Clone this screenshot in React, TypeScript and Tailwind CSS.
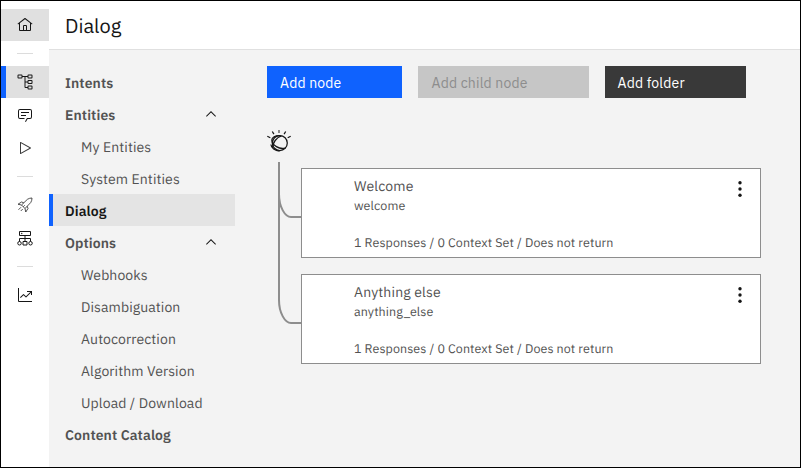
import React from "react";

type IconProps = { children: React.ReactNode };

function Icon({ children }: IconProps) {
  return (
    <svg viewBox="0 0 32 32" className="h-4 w-4" fill="#161616">
      {children}
    </svg>
  );
}

function RailItem({ children, className = "" }: { children: React.ReactNode; className?: string }) {
  return <a className={`flex w-12 shrink-0 items-center justify-center ${className}`}>{children}</a>;
}

function RailDivider() {
  return <div className="mx-auto h-px w-4 shrink-0 bg-[#dcdcdc]" />;
}

function Rail() {
  return (
    <nav className="flex w-12 shrink-0 flex-col bg-white pt-2">
      <RailItem className="mb-3 h-8 bg-[#e0e0e0]">
        <Icon>
          <path d="M16.6123,2.2138a1.01,1.01,0,0,0-1.2427,0L1,13.4194l1.2427,1.5717L4,13.6209V26a2.0041,2.0041,0,0,0,2,2H26a2.0037,2.0037,0,0,0,2-2V13.63L29.7573,15,31,13.4282ZM18,26H14V18h4Zm2,0V18a2.0023,2.0023,0,0,0-2-2H14a2.002,2.002,0,0,0-2,2v8H6V12.0615l10-7.79,10,7.8005V26Z" />
        </Icon>
      </RailItem>
      <RailDivider />
      <RailItem className="mt-3 h-8 border-l-[5px] border-[#0f62fe] bg-[#e0e0e0] pr-[5px]">
        <Icon>
          <path d="M23,9h6a2,2,0,0,0,2-2V3a2,2,0,0,0-2-2H23a2,2,0,0,0-2,2V4H11V3A2,2,0,0,0,9,1H3A2,2,0,0,0,1,3V7A2,2,0,0,0,3,9H9a2,2,0,0,0,2-2V6h4V26a2,2,0,0,0,2,2h4v1a2,2,0,0,0,2,2h6a2,2,0,0,0,2-2V25a2,2,0,0,0-2-2H23a2,2,0,0,0-2,2v1H17V17h4v1a2,2,0,0,0,2,2h6a2,2,0,0,0,2-2V14a2,2,0,0,0-2-2H23a2,2,0,0,0-2,2v1H17V6h4V7A2,2,0,0,0,23,9Zm0-6h6V7H23ZM9,7H3V3H9ZM23,25h6v4H23Zm0-11h6v4H23Z" />
        </Icon>
      </RailItem>
      <RailItem className="h-[33px]">
        <Icon>
          <path d="M17.74,30,16,29l4-7h6a2,2,0,0,0,2-2V8a2,2,0,0,0-2-2H6A2,2,0,0,0,4,8V20a2,2,0,0,0,2,2h9v2H6a4,4,0,0,1-4-4V8A4,4,0,0,1,6,4H26a4,4,0,0,1,4,4V20a4,4,0,0,1-4,4H21.16Z" />
          <path d="M8 10H24V12H8zM8 16H18V18H8z" />
        </Icon>
      </RailItem>
      <RailItem className="h-[33px]">
        <Icon>
          <path fill="#3d3d3d" d="M7,28a1,1,0,0,1-1-1V5a1,1,0,0,1,1.4819-.8763l20,11a1,1,0,0,1,0,1.7525l-20,11A1.0005,1.0005,0,0,1,7,28ZM8,6.6909V25.3088L24.9248,16Z" />
        </Icon>
      </RailItem>
      <div className="h-3" />
      <RailDivider />
      <div className="h-3" />
      <RailItem className="h-8">
        <Icon>
          <g fill="none" stroke="#333333" strokeWidth="1.7" strokeLinejoin="round">
            <path d="M9 16L21 4.500Q25 2 30 2Q30 7 27.500 11L16 23Z" />
            <path d="M13.500 11.500L9 10L2 14.500L9 16M20.500 18.500L22 23L17.500 30L16 23" />
            <path d="M8 20.500l-5 5M11.500 24l-4 4M12.500 19.500l3-3" />
          </g>
        </Icon>
      </RailItem>
      <RailItem className="h-[34px]">
        <Icon>
          <g fill="none" stroke="#161616" strokeWidth="2">
            <path d="M5 3h22v8H5zM16 11v11M5 23v-6h22v6M12 23h8v7h-8z" />
            <circle cx="5" cy="26.500" r="3.500" />
            <circle cx="27" cy="26.500" r="3.500" />
          </g>
          <circle cx="9.500" cy="7" r="1.300" />
        </Icon>
      </RailItem>
      <div className="h-[11px]" />
      <RailDivider />
      <div className="h-3" />
      <RailItem className="h-8">
        <Icon>
          <path d="M4 2H2V28a2 2 0 0 0 2 2H30V28H4Z" />
          <path d="M20 8v2h6.586L18 18.586l-4.293-4.293a1 1 0 0 0-1.414 0L6 20.586 7.414 22 13 16.414l4.293 4.293a1 1 0 0 0 1.414 0L28 11.414V16h2V8Z" />
        </Icon>
      </RailItem>
    </nav>
  );
}

type Entry = { label: string; kind: "group" | "open" | "child" | "active" };

const entries: Entry[] = [
  { label: "Intents", kind: "group" },
  { label: "Entities", kind: "open" },
  { label: "My Entities", kind: "child" },
  { label: "System Entities", kind: "child" },
  { label: "Dialog", kind: "active" },
  { label: "Options", kind: "open" },
  { label: "Webhooks", kind: "child" },
  { label: "Disambiguation", kind: "child" },
  { label: "Autocorrection", kind: "child" },
  { label: "Algorithm Version", kind: "child" },
  { label: "Upload / Download", kind: "child" },
  { label: "Content Catalog", kind: "group" },
];

const entryStyles = {
  group: "pl-4 font-semibold text-[#525252]",
  open: "pl-4 font-semibold text-[#525252]",
  child: "pl-8 text-[#525252]",
  active: "border-l-4 border-[#0f62fe] bg-[#e4e4e4] pl-3 font-semibold text-[#161616]",
};

function SideNav() {
  return (
    <nav className="w-[186px] shrink-0 pt-4">
      {entries.map((e) => (
        <a key={e.label} className={`flex h-8 items-center justify-between pr-4 text-sm tracking-[0.1px] ${entryStyles[e.kind]}`}>
          <span className="pt-px whitespace-nowrap">{e.label}</span>
          {e.kind === "open" && (
            <svg viewBox="0 0 16 16" className="h-4 w-4" fill="#161616">
              <path d="M8 5L13 10 12.3 10.7 8 6.4 3.7 10.7 3 10z" />
            </svg>
          )}
        </a>
      ))}
    </nav>
  );
}

function WatsonIcon() {
  return (
    <svg viewBox="0 0 24 24" className="h-6 w-6" fill="none" stroke="#161616" strokeWidth="1.25">
      <circle cx="12.800" cy="14" r="7.500" />
      <path d="M13.500 6.700C8 6.300 4.800 8.300 4.800 11C4.800 16 12.500 21 18.500 19M14.500 7C9.500 8.500 5.500 13.500 5.700 19M3.900 15.500C4.300 19 8 22 12.500 22" />
      <path d="M5.300 2.500l1.600 2.600M18.700 2.500l-1.600 2.600M0.300 7.200l3 1.500M23.700 7.200l-3 1.500" />
      <path d="M12 1v3" stroke="#6f6f6f" strokeWidth="1.600" />
    </svg>
  );
}

type NodeProps = { title: string; condition: string };

function DialogNode({ title, condition }: NodeProps) {
  return (
    <article className="flex h-[90px] w-[460px] justify-between border border-[#8d8d8d] bg-white pr-3 pl-[52px] text-[#525252]">
      <div className="pt-[7px] whitespace-nowrap">
        <h2 className="text-sm leading-5 tracking-[0.16px]">{title}</h2>
        <p className="mt-px text-[12.5px] leading-[18px] tracking-[0.08px]">{condition}</p>
        <p className="mt-[19px] text-[12.5px] leading-[18px] tracking-[0.08px]">
          1 Responses / 0 Context Set / Does not return
        </p>
      </div>
      <svg viewBox="0 0 16 16" className="mt-3 h-4 w-4" fill="#161616">
        <circle cx="8" cy="1.700" r="1.700" />
        <circle cx="8" cy="8" r="1.700" />
        <circle cx="8" cy="14.300" r="1.700" />
      </svg>
    </article>
  );
}

export default function App() {
  return (
    <div className="flex h-[468px] w-[801px] overflow-hidden border border-black bg-[#f3f3f3] font-['IBM_Plex_Sans',Roboto,sans-serif] antialiased [text-rendering:geometricPrecision]">
      <Rail />
      <div className="flex min-w-0 flex-1 flex-col">
        <header className="flex h-[49px] shrink-0 items-center border-b border-[#e0e0e0] bg-white pl-4">
          <h1 className="pt-px text-xl text-[#161616]">Dialog</h1>
        </header>
        <div className="flex min-h-0 flex-1">
          <SideNav />
          <main className="min-w-0 flex-1 pt-4 pl-8">
            <div className="flex gap-4 text-sm tracking-[0.16px]">
              <button className="h-8 w-[135px] bg-[#0f62fe] pt-px pl-[13px] text-left text-white">Add node</button>
              <button className="h-8 w-[171px] bg-[#c6c6c6] pt-px pl-[13.5px] text-left text-[#8d8d8d]">Add child node</button>
              <button className="h-8 w-[141px] bg-[#393939] pt-px pl-[12.5px] text-left text-white">Add folder</button>
            </div>
            <div className="mt-[31px]">
              <WatsonIcon />
            </div>
            <div className="mt-[9px] flex">
              <svg viewBox="0 0 34 202" className="h-[202px] w-[34px] shrink-0" fill="none" stroke="#8d8d8d" strokeWidth="2">
                <path d="M12 0V138C12 151 18 161 24 161H34M12 32C12 45 18 55 24 55H34" />
              </svg>
              <div className="mt-[6px] flex flex-col gap-4">
                <DialogNode title="Welcome" condition="welcome" />
                <DialogNode title="Anything else" condition="anything_else" />
              </div>
            </div>
          </main>
        </div>
      </div>
    </div>
  );
}
